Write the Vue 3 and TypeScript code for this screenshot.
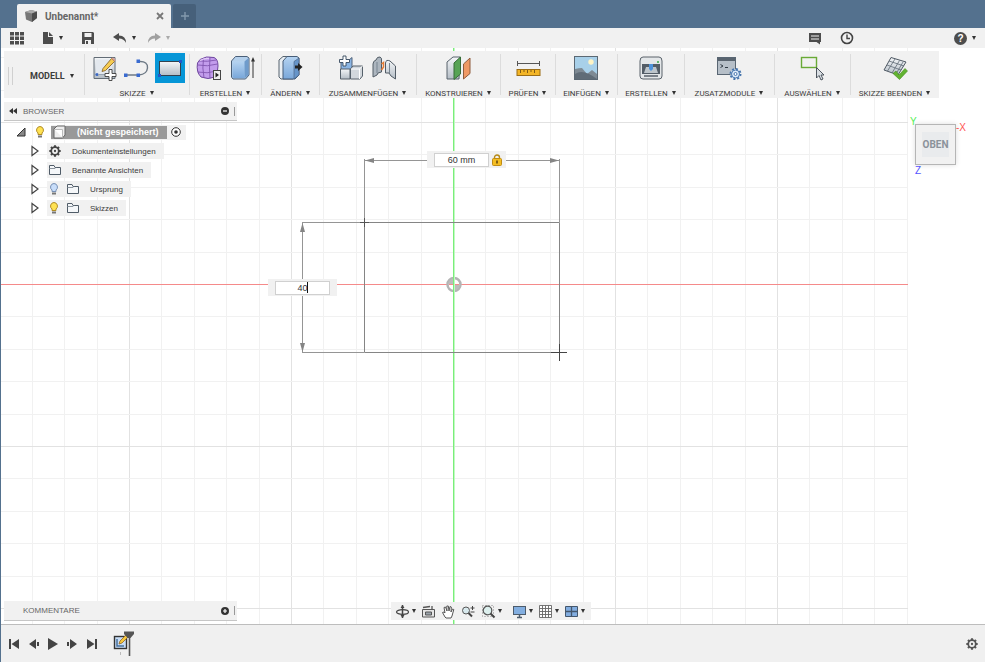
<script setup lang="ts">
import { ref, computed } from 'vue'

interface Tool { icon: string; name: string; active?: boolean }
interface ToolGroup { label: string; tools: Tool[] }
interface TreeRow { label: string; icon: string; bulb?: 'on' | 'off' }

const groups: ToolGroup[] = [
  { label: 'SKIZZE', tools: [{ icon: 'sketch', name: 'Skizze erstellen' }, { icon: 'curve', name: 'Linie' }, { icon: 'rect', name: 'Rechteck', active: true }] },
  { label: 'ERSTELLEN', tools: [{ icon: 'form', name: 'Form erstellen' }, { icon: 'extrude', name: 'Extrusion' }] },
  { label: 'ÄNDERN', tools: [{ icon: 'press', name: 'Drücken/Ziehen' }] },
  { label: 'ZUSAMMENFÜGEN', tools: [{ icon: 'component', name: 'Neue Komponente' }, { icon: 'joint', name: 'Verbindung' }] },
  { label: 'KONSTRUIEREN', tools: [{ icon: 'plane', name: 'Ebene' }] },
  { label: 'PRÜFEN', tools: [{ icon: 'measure', name: 'Messen' }] },
  { label: 'EINFÜGEN', tools: [{ icon: 'image', name: 'Bild' }] },
  { label: 'ERSTELLEN', tools: [{ icon: 'printer', name: '3D-Druck' }] },
  { label: 'ZUSATZMODULE', tools: [{ icon: 'script', name: 'Skripte' }] },
  { label: 'AUSWÄHLEN', tools: [{ icon: 'select', name: 'Auswahl' }] },
  { label: 'SKIZZE BEENDEN', tools: [{ icon: 'finish', name: 'Beenden' }] },
]

const toolIcons: Record<string, string> = {
  sketch: `<path d="M3 2.500H24V23.500H3Z" fill="url(#silver)" stroke="#626c76"/><path d="M5 4.500H21V20H5Z" fill="#e3e8ee"/><circle cx="6" cy="19.500" r="1.600" fill="#3c68c4"/><path d="M7 19.500H15" stroke="#98a4b2"/><path d="M12 13.500 20.500 3.500 23.500 6.500 14.500 15.500 11 16.500Z" fill="#f6cc52" stroke="#7c5a22" stroke-width=".8"/><path d="M20.500 3.500 22 2.500 24.500 5 23.500 6.500Z" fill="#d99a8c"/><path d="M18 14.500H21V18.500H25V21.500H21V25.500H18V21.500H14V18.500H18Z" fill="#fff" stroke="#3c3c3c" stroke-width=".9"/>`,
  curve: `<path d="M2 20H15M15 6.500C21 6 24 9 23.500 13C23 18 20 19.500 15 20" fill="none" stroke="#6d7985" stroke-width="1.400"/><path d="M0 18.500H3.500V22H0ZM12.500 18.500H16V22H12.500ZM12.500 4.500H16V8H12.500Z" fill="#3a6bd0"/>`,
  rect: `<rect x="2.500" y="6.500" width="21" height="14" fill="url(#silver)" stroke="#33424f"/><path d="M1 19H4V22H1ZM22 5H25V8H22Z" fill="#2257c8"/>`,
  form: `<path d="M4 4.500Q10 .5 18 2.500Q22 4 22 11Q22 18 19 22Q12 25 5 22Q0 17 1.500 8Z" fill="#c29cec" stroke="#6e469e"/><path d="M7.500 3Q6 13 8 23M14 2Q13 13 14 23.500M2 10Q11 12 21.500 9M1.500 17Q11 19 21 16M3 6Q11 7 20.500 5" fill="none" stroke="#8156b0" stroke-width=".9"/><path d="M4 5.500Q9 3 13 3.500" stroke="#dfc9f6" stroke-width="1.300" fill="none"/><rect x="17.500" y="15.500" width="7" height="9" fill="#eee" stroke="#444"/><path d="M19.500 17.500 23 20 19.500 22.500Z" fill="#222"/>`,
  extrude: `<path d="M2.500 6 6.500 1.500H18L20 3V20L16.500 24H4L2.500 22Z" fill="#b4d0ec" stroke="#4a5f78"/><path d="M3.500 6.500H15.500V23H4.500L3.500 21.500Z" fill="url(#blue)"/><path d="M15.500 6.500 19.500 3V20L15.500 23.500Z" fill="#6f9bcb"/><path d="M24 23V4" stroke="#333"/><path d="M22 6.500 24 2 26 6.500Z" fill="#333"/>`,
  press: `<path d="M2 5 6 1.500H18L16 24H4L2 22Z" fill="#e8eef3" stroke="#56636f"/><path d="M6 6 10 1.500H20L22 3V20L18 24H6Z" fill="url(#blue)" stroke="#465d78"/><path d="M17 6.500 22 3V20L17 24Z" fill="#6795c9" stroke="#465d78" stroke-width=".6"/><path d="M18 10.500H21V8L25.500 12 21 16V13.500H18Z" fill="#222"/>`,
  component: `<path d="M3 5H11L14 2.500V13L11 15H3Z" fill="#8bb5e3" stroke="#50637a"/><path d="M2.500 14H12V24H2.500Z" fill="url(#silver)" stroke="#56616b"/><path d="M12.500 14 15 11H24.500V21L22 24H12.500Z" fill="#d3d8dd" stroke="#56616b"/><path d="M13 14H21.500V24M21.500 14 24.500 11" fill="none" stroke="#fff"/><path d="M5 1H8V4.500H11.500V7.500H8V11H5V7.500H1.500V4.500H5Z" fill="#fff" stroke="#34475c" stroke-width=".9"/>`,
  joint: `<path d="M2 22V9Q2 6 5 5Q6 1.500 9 2Q11 3 10.500 5V17L7 18L6 20Z" fill="#adb6bf" stroke="#525c66"/><path d="M24.500 24V11L19 6Q15 4 14.500 8V18L18 18L20 21Z" fill="url(#silver)" stroke="#525c66"/><path d="M6 7V18M18.500 8V18" stroke="#788591"/><path d="M10.500 9 12.500 7.500V12L10.500 15" fill="none" stroke="#e57b35" stroke-width="1.500"/>`,
  plane: `<path d="M2 7 8 2H15L14 24H2Z" fill="url(#silver)" stroke="#59636d"/><path d="M9 8 15.500 2V19L9 24.500Z" fill="#57a355" stroke="#376c38"/><path d="M18.500 9 25 3V18.500L18.500 24Z" fill="#ef9965" stroke="#8f5c3e"/>`,
  measure: `<path d="M2 8.500H25M2.500 6V11M24.500 6V11" stroke="#555"/><rect x="2" y="14.500" width="23" height="6" fill="#f3b526" stroke="#9b6e17"/><path d="M5.500 15V18M9 15V17M12.500 15V18M16 15V17M19.500 15V18" stroke="#815b15"/>`,
  image: `<rect x="1.500" y="1.500" width="23" height="23" fill="#a8d0e9" stroke="#5b6873"/><circle cx="18" cy="7" r="2.700" fill="#fff4c5"/><path d="M2 14Q6 13 9 13L14 19 19 15 24 19V24H2Z" fill="#7e8a94"/><path d="M2 19Q10 13 24 24H2Z" fill="#606c77"/>`,
  printer: `<path d="M5 2H21Q24 2 24 6V21Q24 24 21 24H5Q2 24 2 21V6Q2 2 5 2Z" fill="#e4e7e9" stroke="#5a636b"/><path d="M4 9H22V19H4Z" fill="#535d67"/><path d="M6 18 8 12H18L20 18Z" fill="#bdc5cb"/><path d="M6 21H20" stroke="#59616a" stroke-width="1.500"/><path d="M11 9H15V14L13 16 11 14Z" fill="#4e93db"/><circle cx="20" cy="7" r="1" fill="#36a646"/>`,
  script: `<rect x="1.500" y="2.500" width="18" height="17" fill="#b6bfc8" stroke="#596673"/><path d="M2 3H19V6H2Z" fill="#59646f"/><path d="M4.500 9.500 7 11 4.500 12.500M9 12.500H12" stroke="#303a44" fill="none"/><circle cx="19.500" cy="19" r="5" fill="#e2edfa" stroke="#4775ac" stroke-width="2" stroke-dasharray="2 1.900"/><circle cx="19.500" cy="19" r="4" fill="#dcebfa" stroke="#4775ac"/><circle cx="19.500" cy="19" r="1.500" fill="#fff" stroke="#4775ac"/>`,
  select: `<rect x="2.500" y="2.500" width="15" height="10" fill="none" stroke="#69aa36" stroke-width="1.400"/><path d="M17.500 12.500V23L20 20.500 22 25 24 24 22 20H25Z" fill="#d9dee3" stroke="#3d4650" stroke-width=".9"/>`,
  finish: `<path d="M9 2.500 24 7 16 20 2 15Z" fill="url(#silver)" stroke="#4f5964"/><path d="M13 4 5.500 16M17.500 5.500 10 18M21 7 14 19M7 6 22 11M5 10 19 15" stroke="#606b76" stroke-width=".8"/><path d="M11 18.500 14 16 17 20 23 13.500 25.500 16 17.500 24.500Z" fill="#62b331" stroke="#418a1c" stroke-width=".6"/>`,
}

const treeRows: TreeRow[] = [
  { label: 'Dokumenteinstellungen', icon: 'gear' },
  { label: 'Benannte Ansichten', icon: 'folder' },
  { label: 'Ursprung', icon: 'folder', bulb: 'off' },
  { label: 'Skizzen', icon: 'folder', bulb: 'on' },
]

const gearPath = 'M8 1.500V4M8 12V14.500M1.500 8H4M12 8H14.500M3.400 3.400 5.200 5.200M10.800 10.800 12.600 12.600M3.400 12.600 5.200 10.800M10.800 5.200 12.600 3.400'

const navTools = [
  { name: 'Orbit', menu: true, art: '<ellipse cx="7.500" cy="8" rx="6" ry="2.300" fill="none" stroke="#444" stroke-width="1.200"/><path d="M7.500 1V14" stroke="#444" stroke-width="1.500"/><path d="M5.500 4 7.500 1 9.500 4ZM5.500 11 7.500 14 9.500 11Z" fill="#444"/>' },
  { name: 'Ansehen', menu: false, art: '<path d="M1.500 5.500H13.500V13H1.500Z" fill="#e6e6e6" stroke="#555"/><path d="M4.500 8H10.500V11H4.500Z" fill="#9aa3ab" stroke="#555"/><path d="M2 3.500 9 2.500M11 2V5" stroke="#555" stroke-width="1.300"/>' },
  { name: 'Pan', menu: false, art: '<path d="M4 13 1.500 8.500 3 8 4 9 3 3.500 4.500 3 6 7 5.800 2 7.300 2 8 7 9 2.500 10.300 3 10 8 11.500 5 12.800 5.500 11 12 10 14H5Z" fill="#fff" stroke="#555"/>' },
  { name: 'Zoom', menu: false, art: '<circle cx="5" cy="6.500" r="3.500" fill="#d8e9ed" stroke="#555"/><path d="M7.500 9 11 12.500" stroke="#444" stroke-width="2"/><path d="M9.500 4H13.500M11.500 2V6M9.500 8H13.500" stroke="#444"/>' },
  { name: 'Einpassen', menu: true, art: '<path d="M1.500 1.500H12.500V12.500H1.500Z" fill="none" stroke="#888" stroke-dasharray="1 2"/><circle cx="6.500" cy="6.500" r="4.300" fill="#dcefed" stroke="#555" stroke-width="1.200"/><path d="M9.500 9.500 13.500 13.500" stroke="#444" stroke-width="2"/>' },
  { name: 'Anzeige', menu: true, art: '<rect x="1.500" y="2.500" width="12" height="8" fill="#82aee0" stroke="#4c5b6b"/><path d="M5 13.500H10M7.500 11V13" stroke="#4c5b6b" stroke-width="1.500"/>' },
  { name: 'Raster', menu: true, art: '<path d="M1.500 1.500H13.500V13.500H1.500ZM4.500 1.500V13.500M7.500 1.500V13.500M10.500 1.500V13.500M1.500 4.500H13.500M1.500 7.500H13.500M1.500 10.500H13.500" fill="#fff" stroke="#666" stroke-width=".9"/>' },
  { name: 'Ansichtsfenster', menu: true, art: '<path d="M1.500 2.500H13.500V12.500H1.500Z" fill="#82ade0" stroke="#44576d"/><path d="M7.500 2.500V12.500M1.500 7.500H13.500" stroke="#44576d" stroke-width="1.300"/>' },
]

const playback = [
  { name: 'Zum Anfang', d: 'M1 2H3V12H1ZM11 2V12L3.500 7Z' },
  { name: 'Zurück', d: 'M9 2V12L2 7ZM10 5H12V9H10Z' },
  { name: 'Abspielen', d: 'M2 1 12 7 2 13Z' },
  { name: 'Vor', d: 'M5 2V12L12 7ZM2 5H4V9H2Z' },
  { name: 'Zum Ende', d: 'M11 2H13V12H11ZM3 2V12L10.500 7Z' },
]

const origin = { x: 454, y: 284.5 }
const step = 32.4
const gridRight = 908

const verticals = computed(() => Array.from({ length: 29 }, (_, i) => i - 14)
  .map(k => ({ k, p: Math.round(origin.x + k * step) - 0.5, major: k % 5 === 0 }))
  .filter(l => l.k !== 0 && l.p > 1))
const horizontals = computed(() => Array.from({ length: 18 }, (_, i) => i - 7)
  .map(k => ({ k, p: Math.floor(origin.y + k * step) + 0.5, major: k % 5 === 0 }))
  .filter(l => l.k !== 0))

const widthValue = ref('60 mm')
const heightValue = ref('40')
</script>

<template>
  <div class="app">
    <svg class="defs" aria-hidden="true">
      <defs>
        <linearGradient id="silver" x1="0" y1="0" x2="0" y2="1"><stop offset="0" stop-color="#f4f6f8" /><stop offset="1" stop-color="#b4bdc6" /></linearGradient>
        <linearGradient id="blue" x1="0" y1="0" x2="0" y2="1"><stop offset="0" stop-color="#b5d3f1" /><stop offset="1" stop-color="#79a7da" /></linearGradient>
      </defs>
    </svg>

    <header class="tabs">
      <div class="tab">
        <svg width="14" height="14" viewBox="0 0 14 14"><path d="M1 3 7 1 13 2.500V9L8 13 2 10.500Z" fill="#777" /><path d="M1 3 7 1 13 2.500 8 4.500Z" fill="#aaa" /><path d="M8 4.500 13 2.500V9L8 13Z" fill="#4d4d4d" /></svg>
        <span class="tab-title">Unbenannt*</span>
        <button class="close" aria-label="Schließen"><svg width="8" height="8" viewBox="0 0 8 8"><path d="M1 1 7 7M7 1 1 7" stroke="#777" stroke-width="1.800" /></svg></button>
      </div>
      <button class="new-tab" aria-label="Neuer Tab"><svg width="10" height="10" viewBox="0 0 10 10"><path d="M5 1V9M1 5H9" stroke="#8399ad" stroke-width="1.400" /></svg></button>
    </header>

    <div class="quick">
      <button aria-label="Daten"><svg width="14" height="14" viewBox="0 0 14 14"><path d="M0 1H4V4.500H0ZM5 1H9V4.500H5ZM10 1H14V4.500H10ZM0 5.500H4V9H0ZM5 5.500H9V9H5ZM10 5.500H14V9H10ZM0 10H4V13.500H0ZM5 10H9V13.500H5ZM10 10H14V13.500H10Z" fill="#4d4d4d" /></svg></button>
      <button class="file" aria-label="Datei"><svg width="12" height="14" viewBox="0 0 12 14"><path d="M1 1H6V6H11V13H1ZM7 1 11 5H7Z" fill="#4d4d4d" /></svg><i class="caret" /></button>
      <button class="save" aria-label="Speichern"><svg width="14" height="14" viewBox="0 0 14 14"><path d="M1 1H12L13 2V13H1Z" fill="#4d4d4d" /><path d="M3.500 2H10.500V6H3.500ZM4 9H10V13H4Z" fill="#f1f1f1" /><path d="M5 10H7V13H5Z" fill="#4d4d4d" /></svg></button>
      <button class="undo" aria-label="Rückgängig"><svg width="14" height="12" viewBox="0 0 14 12"><path d="M0 5 6 1V3.500Q13 3.500 13 11Q11 6.500 6 6.500V9Z" fill="#4d4d4d" /></svg><i class="caret" /></button>
      <button class="redo" aria-label="Wiederholen"><svg width="14" height="12" viewBox="0 0 14 12"><path d="M14 5 8 1V3.500Q1 3.500 1 11Q3 6.500 8 6.500V9Z" fill="#a0a0a0" /></svg><i class="caret" /></button>
      <span class="spacer" />
      <button aria-label="Kommentare"><svg width="14" height="14" viewBox="0 0 14 14"><path d="M1 2H13V11H12V13.500L8.500 11H1Z" fill="#4d4d4d" /><path d="M3 5H11M3 8H11" stroke="#f1f1f1" /></svg></button>
      <button class="clock" aria-label="Auftragsstatus"><svg width="14" height="14" viewBox="0 0 14 14"><circle cx="7" cy="7" r="5.500" fill="none" stroke="#444" stroke-width="1.600" /><path d="M7 3.500V7.500H10" fill="none" stroke="#444" stroke-width="1.400" /></svg></button>
      <button class="help" aria-label="Hilfe"><span class="help-disc">?</span><i class="caret" /></button>
    </div>

    <main class="viewport">
      <svg class="canvas" width="100%" height="100%" aria-label="Skizze">
        <g transform="translate(-1 -48)">
          <line v-for="l in verticals" :key="'v' + l.k" :x1="l.p" :x2="l.p" y1="48" y2="800" :stroke="l.major ? '#e2e2e2' : '#f1f1f1'" />
          <line v-for="l in horizontals" :key="'h' + l.k" x1="0" :x2="gridRight" :y1="l.p" :y2="l.p" :stroke="l.major ? '#e2e2e2' : '#f1f1f1'" />
          <rect x="0" y="284" width="908" height="1" fill="#f58a8a" />
          <circle cx="454" cy="284.500" r="6.500" fill="#fff" stroke="#b4b4b4" stroke-width="2.500" />
          <path d="M454 284.500V278.500A6 6 0 0 0 448 284.500ZM454 284.500V290.500A6 6 0 0 0 460 284.500Z" fill="#bcbcbc" />
          <rect x="449" y="284" width="10" height="1" fill="#f58a8a" />
          <rect x="453" y="48" width="1" height="760" fill="#7aee7a" />
          <rect x="454" y="48" width="1" height="760" fill="#c2f9c2" />
          <path d="M364.500 222.500H559.500V352.500H364.500Z" fill="none" stroke="#858585" />
          <path d="M364.500 159V222M559.500 159V222M364.500 160.500H559.500M302 222.500H364M302 352.500H364M302.500 222V352" fill="none" stroke="#959595" />
          <path d="M365 160.500 374 158V163ZM559 160.500 550 158V163ZM302.500 223 300 232H305ZM302.500 352 300 343H305Z" fill="#858585" />
          <path d="M360 222.500H369M364.500 218V227" stroke="#555" />
          <path d="M551 352.500H567M559.500 344V361" stroke="#444" />
        </g>
      </svg>

      <nav class="toolbar" aria-label="Werkzeuge">
        <div class="workspace">
          <span class="grip" />
          <button class="mode">MODELL<i class="caret" /></button>
        </div>
        <section v-for="(group, i) in groups" :key="i" class="group">
          <div class="tools">
            <button v-for="tool in group.tools" :key="tool.icon" class="tool" :class="{ active: tool.active }" :aria-label="tool.name">
              <svg width="26" height="26" viewBox="0 0 26 26" v-html="toolIcons[tool.icon]" />
            </button>
          </div>
          <button class="group-label">{{ group.label }}<i class="caret" /></button>
        </section>
      </nav>

      <section class="browser">
        <div class="panel-head">
          <svg class="panel-collapse" width="10" height="8" viewBox="0 0 10 8"><path d="M5 1V7L1 4ZM9 1V7L5 4Z" fill="#333" /></svg>
          <span>BROWSER</span>
          <button class="panel-toggle" aria-label="Minimieren"><svg width="8" height="8" viewBox="0 0 8 8"><circle cx="4" cy="4" r="4" fill="#333" /><path d="M2 4H6" stroke="#fff" stroke-width="1.200" /></svg></button>
          <span class="resize" />
        </div>
        <ul class="tree">
          <li class="row root">
            <svg class="twist" width="10" height="10" viewBox="0 0 10 10"><path d="M9 1V9H1Z" fill="#888" stroke="#333" /></svg>
            <svg width="10" height="14" viewBox="0 0 10 14"><path d="M5 1.500A3.600 3.600 0 0 1 7 8V9.500H3V8A3.600 3.600 0 0 1 5 1.500Z" fill="#ffe252" stroke="#b18c23" /><path d="M3 10.500H7V12.500H3Z" fill="#777" /></svg>
            <span class="root-item">
              <span class="root-name">
                <svg width="14" height="14" viewBox="0 0 14 14"><path d="M1 4 4 1H12V10L9.500 13H1Z" fill="#eee" stroke="#666" /><path d="M1.500 4.500H9.500V12.500" fill="#fff" stroke="#bbb" /></svg>
                <b>(Nicht gespeichert)</b>
              </span>
              <svg width="10" height="10" viewBox="0 0 10 10"><circle cx="5" cy="5" r="4.300" fill="#fff" stroke="#333" /><circle cx="5" cy="5" r="1.800" fill="#333" /></svg>
            </span>
          </li>
          <li v-for="row in treeRows" :key="row.label" class="row child">
            <svg class="twist" width="10" height="12" viewBox="0 0 10 12"><path d="M2 1.500 8 6 2 10.500Z" fill="#fff" stroke="#444" stroke-width="1.200" /></svg>
            <span class="item">
              <svg v-if="row.bulb" class="bulb" width="10" height="14" viewBox="0 0 10 14"><path d="M5 1.500A3.600 3.600 0 0 1 7 8V9.500H3V8A3.600 3.600 0 0 1 5 1.500Z" :fill="row.bulb === 'on' ? '#ffe252' : '#c9defa'" :stroke="row.bulb === 'on' ? '#b18c23' : '#7790b5'" /><path d="M3 10.500H7V12.500H3Z" fill="#777" /></svg>
              <svg v-if="row.icon === 'gear'" width="14" height="14" viewBox="0 0 16 16"><circle cx="8" cy="8" r="4.300" fill="none" stroke="#444" stroke-width="2" /><path :d="gearPath" stroke="#444" stroke-width="2.400" /><circle cx="8" cy="8" r="1.300" fill="#444" /></svg>
              <svg v-else width="14" height="14" viewBox="0 0 14 14"><path d="M1.500 11.500V2.500H6L7 4.500H12.500V11.500Z" fill="#f5f7f9" stroke="#505c68" /><path d="M1.500 5.500H7L8 4.500" fill="none" stroke="#8b949d" /></svg>
              <span class="item-label">{{ row.label }}</span>
            </span>
          </li>
        </ul>
      </section>

      <div class="dimension dim-width">
        <input v-model="widthValue" aria-label="Breite">
        <svg width="10" height="12" viewBox="0 0 10 12"><path d="M2.500 5V3.500A2.500 2.500 0 0 1 7.500 3.500V5" fill="none" stroke="#b68a19" stroke-width="1.400" /><rect x=".5" y="4.500" width="9" height="7" rx="1" fill="#f4bd22" stroke="#c08c13" /><path d="M5 6.500V9.500" stroke="#5c410b" stroke-width="1.500" /></svg>
      </div>
      <div class="dimension dim-height">
        <input v-model="heightValue" aria-label="Höhe">
        <span class="text-cursor" />
      </div>

      <div class="viewcube">
        <button class="cube-face"><span>OBEN</span></button>
        <span class="axis axis-x">-X</span>
        <span class="axis axis-y">Y</span>
        <span class="axis axis-z">Z</span>
      </div>

      <div class="lower">
        <section class="panel-head comments">
          <span>KOMMENTARE</span>
          <button class="panel-toggle" aria-label="Hinzufügen"><svg width="8" height="8" viewBox="0 0 8 8"><circle cx="4" cy="4" r="4" fill="#333" /><path d="M2 4H6M4 2V6" stroke="#fff" stroke-width="1.200" /></svg></button>
          <span class="resize" />
        </section>
        <nav class="navbar" aria-label="Navigation">
          <button v-for="n in navTools" :key="n.name" :class="{ display: n.name === 'Anzeige' }" :aria-label="n.name">
            <svg width="15" height="15" viewBox="0 0 15 15" v-html="n.art" /><i v-if="n.menu" class="caret" />
          </button>
        </nav>
      </div>
    </main>

    <footer class="timeline">
      <div class="playback">
        <button v-for="p in playback" :key="p.name" :aria-label="p.name"><svg width="14" height="14" viewBox="0 0 14 14"><path :d="p.d" fill="#444" /></svg></button>
      </div>
      <button class="feature" aria-label="Skizze1">
        <svg width="24" height="28" viewBox="0 0 24 28"><rect x="2.500" y="6.500" width="12" height="12" fill="#c8ddf5" stroke="#333" stroke-width="1.400" /><path d="M5 9V16H12" fill="none" stroke="#47719f" stroke-width="1.500" /><path d="M7 14 8 11 14 5 16 7 10 13Z" fill="#f6c83d" stroke="#94651e" stroke-width=".8" /><path d="M12 1.500H22V4L18.500 8H15.500L12 4Z" fill="#555" /><path d="M17.500 7V26" stroke="#555" stroke-width="1.600" /><path d="M8.500 22V25" stroke="#bbb" /></svg>
      </button>
      <span class="spacer" />
      <button aria-label="Einstellungen"><svg width="14" height="14" viewBox="0 0 16 16"><circle cx="8" cy="8" r="4.300" fill="none" stroke="#555" stroke-width="2" /><path :d="gearPath" stroke="#555" stroke-width="2.400" /><circle cx="8" cy="8" r="1.300" fill="#555" /></svg></button>
    </footer>
  </div>
</template>

<style>
body { background: #fff; }
</style>

<style scoped>
* { box-sizing: border-box; }
.app {
  display: flex;
  flex-direction: column;
  height: 100vh;
  overflow: hidden;
  border-left: 1px solid #54718e;
  font-family: "Liberation Sans", Arial, sans-serif;
  font-size: 9px;
  color: #3c3c3c;
}
.defs { position: absolute; width: 0; height: 0; }
button { display: flex; align-items: center; padding: 0; border: 0; background: none; color: inherit; font: inherit; }
svg { display: block; flex: none; }
.spacer { flex: 1; }
.caret { flex: none; border: solid transparent; border-width: 4px 2px 0; border-top-color: #333; }

.tabs { display: flex; flex: none; align-items: flex-end; gap: 2px; height: 28px; padding-left: 16px; background: #54718e; }
.tab { display: flex; align-items: center; width: 154px; height: 24px; padding: 0 7px; background: #f1f1f1; border-radius: 2px 2px 0 0; }
.tab-title { flex: 1; padding-left: 7px; font: bold 10px Roboto, sans-serif; color: #666; }
.new-tab { justify-content: center; width: 23px; height: 24px; background: #46607a; border-radius: 2px 2px 0 0; }

.quick { display: flex; flex: none; align-items: center; height: 20px; padding: 0 9px; background: #f1f1f1; }
.quick .caret { margin-left: 5px; }
.quick .file { margin-left: 18px; }
.quick .save { margin-left: 18px; }
.quick .undo { margin-left: 18px; }
.quick .redo { margin-left: 11px; }
.quick .redo .caret { border-top-color: #aaa; }
.quick .clock { margin-left: 18px; }
.quick .help { margin-left: 100px; }
.help-disc { width: 13px; height: 13px; border-radius: 50%; background: #4d4d4d; color: #fff; font-weight: bold; font-size: 10px; line-height: 13px; text-align: center; }

.viewport { position: relative; display: flex; flex: 1; flex-direction: column; min-height: 0; padding-left: 3px; }
.canvas { position: absolute; inset: 0; }

.toolbar {
  position: relative;
  display: grid;
  grid-template-columns: 80px 105px 72px 58px 97px 84px 55px 62px 67px 90px 76px 89px;
  align-self: flex-start;
  height: 47px;
  margin-top: 3px;
  background: #f1f1f1;
}
.workspace { display: flex; align-items: center; padding: 2px 0 0 4px; }
.grip { width: 5px; height: 18px; border: solid #d0d0d0; border-width: 0 1px; }
.mode { gap: 5px; margin-left: 17px; font: bold 9px Roboto, sans-serif; }
.group { position: relative; display: flex; flex-direction: column; align-items: center; padding-top: 2px; }
.group::before { content: ""; position: absolute; left: 0; top: 3px; bottom: 3px; border-left: 1px solid #dcdcdc; }
.tools { display: flex; gap: 3px; }
.tool { justify-content: center; width: 30px; height: 30px; }
.tool.active { background: #0696d7; }
.group-label { gap: 4px; height: 15px; padding-top: 5px; font: 8px Roboto, sans-serif; white-space: nowrap; }

.browser { position: relative; width: 233px; margin-top: 4px; }
.panel-head { display: flex; align-items: center; height: 19px; padding-left: 4px; background: #f1f1f1; border-bottom: 1px solid #c6c6c6; color: #666; font-size: 8px; }
.panel-collapse { margin-right: 5px; }
.panel-toggle { margin-left: auto; }
.resize { width: 3px; height: 9px; margin-left: 5px; border: solid #999; border-width: 0 0 0 1px; }
.tree { display: flex; flex-direction: column; gap: 3px; margin: 3px 0 0; padding: 0; list-style: none; }
.row { display: flex; align-items: center; height: 16px; }
.root { gap: 9px; padding-left: 12px; }
.child { gap: 7px; padding-left: 26px; }
.root-item { display: flex; align-items: center; gap: 4px; height: 15px; margin-left: -3px; padding-right: 5px; background: #f1f1f1; }
.root-name { display: flex; align-items: center; gap: 10px; height: 13px; padding: 0 8px 0 2px; background: #999; color: #fff; }
.item { display: flex; align-items: center; height: 16px; padding: 0 8px 0 1px; background: #f1f1f1; font-size: 8px; }
.bulb { margin: 0 7px 0 1px; }
.item-label { padding-left: 10px; }

.dimension { position: absolute; display: flex; align-items: center; gap: 3px; height: 17px; padding: 0 7px; background: #f1f1f1; }
.dimension input { width: 55px; height: 14px; padding: 0; border: 1px solid #d0d0d0; background: #fff; color: #333; font: 9px "Liberation Sans", sans-serif; text-align: center; outline: 0; }
.dim-width { left: 426px; top: 103px; padding-right: 4px; }
.dim-height { left: 267px; top: 231px; }
.dim-height .text-cursor { position: absolute; left: 39px; top: 3px; width: 1px; height: 11px; background: #111; }

.viewcube { position: absolute; top: 76px; right: 29px; width: 41px; height: 41px; }
.cube-face { justify-content: center; width: 41px; height: 41px; border: 1px solid #b5b5b5; background: #f1f1f1; box-shadow: 0 0 5px #ddd; }
.cube-face span { padding: 7px 1px; background: #e9ebed; color: #8b929a; font: bold 10px Roboto, sans-serif; }
.axis { position: absolute; font-size: 10px; line-height: 10px; white-space: nowrap; }
.axis-x { left: 41px; top: -1px; color: #f55; }
.axis-y { left: -5px; top: -7px; color: #5e5; }
.axis-z { left: 0; top: 42px; color: #55f; }

.lower { position: relative; display: flex; align-items: center; gap: 154px; margin-top: auto; padding-bottom: 3px; }
.comments { width: 233px; height: 20px; padding-left: 19px; }
.navbar { display: flex; align-items: center; gap: 5px; height: 18px; padding: 0 6px 0 4px; background: #f1f1f1; }
.navbar button { gap: 2px; }
.navbar .display { margin-left: 5px; }

.timeline { display: flex; flex: none; align-items: center; height: 38px; padding: 0 6px 0 7px; background: #f0f0f0; border-top: 1px solid #bdbdbd; }
.playback { display: flex; gap: 5px; }
.feature { margin-left: 14px; }
</style>
